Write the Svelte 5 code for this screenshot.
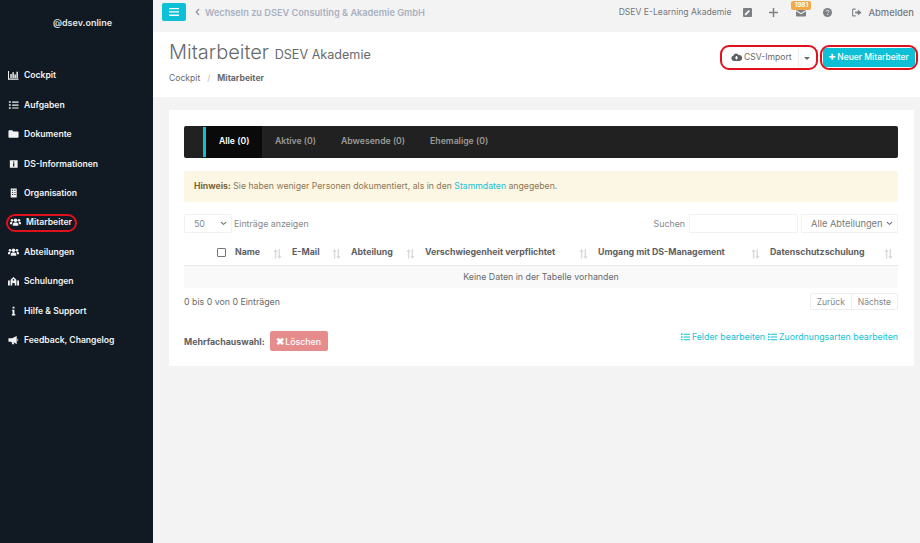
<script lang="ts">
  const nav = [
    { label: 'Cockpit', icon: 'chart' },
    { label: 'Aufgaben', icon: 'tasks' },
    { label: 'Dokumente', icon: 'folder' },
    { label: 'DS-Informationen', icon: 'info' },
    { label: 'Organisation', icon: 'building' },
    { label: 'Mitarbeiter', icon: 'users', active: true },
    { label: 'Abteilungen', icon: 'users' },
    { label: 'Schulungen', icon: 'school' },
    { label: 'Hilfe & Support', icon: 'i' },
    { label: 'Feedback, Changelog', icon: 'bullhorn' }
  ]
  const tabs = ['Alle (0)', 'Aktive (0)', 'Abwesende (0)', 'Ehemalige (0)']
  const columns = [
    { label: 'Name', width: 57 },
    { label: 'E-Mail', width: 59 },
    { label: 'Abteilung', width: 74 },
    { label: 'Verschwiegenheit verpflichtet', width: 173 },
    { label: 'Umgang mit DS-Management', width: 172 },
    { label: 'Datenschutzschulung', width: 128 }
  ]
</script>

{#snippet navIcon(name: string)}
  <svg class="nav-icon" viewBox="0 0 12 10" aria-hidden="true">
    {#if name === 'chart'}
      <path d="M.5 .5v9h11" fill="none" stroke="currentColor" stroke-width="1.200" />
      <path d="M2.500 4h1.600v4.200H2.500zM4.800 2h1.600v6.200H4.800zM7 4.500h1.600v3.700H7zM9.200 1.500h1.600v6.700H9.200z" fill="currentColor" />
    {:else if name === 'tasks'}
      <path d="M4.500 1.200h7v1.300h-7zM4.500 4.400h7v1.300h-7zM4.500 7.600h7v1.300h-7zM1 1h2v1.600H1zM1 4.200h2v1.600H1zM1 7.400h2V9H1z" fill="currentColor" />
    {:else if name === 'folder'}
      <path d="M.5 2.200C.5 1.500 1 1 1.600 1h3l1.200 1.300h4.600c.6 0 1.100.5 1.100 1.100v4.500c0 .6-.5 1.100-1.100 1.100H1.600C1 9 .5 8.500.5 7.900z" fill="currentColor" />
    {:else if name === 'info'}
      <path fill-rule="evenodd" d="M2 .8h8.500v8.400H2zM5.500 2.200v1.200h1.400V2.200zM5.500 4.300v3.500h1.400V4.300z" fill="currentColor" />
    {:else if name === 'building'}
      <path fill-rule="evenodd" d="M3 0h6.500v10H3zM4.300 1.500v1h1.300v-1zM6.900 1.500v1h1.300v-1zM4.300 3.800v1h1.300v-1zM6.900 3.800v1h1.300v-1zM4.300 6.100v1h1.300v-1zM6.900 6.100v1h1.300v-1z" fill="currentColor" />
    {:else if name === 'users'}
      <circle cx="6" cy="3.200" r="2" fill="currentColor" />
      <circle cx="2.200" cy="3" r="1.400" fill="currentColor" />
      <circle cx="9.800" cy="3" r="1.400" fill="currentColor" />
      <path d="M3 9.200V7.300C3 6 4 5.500 6 5.500s3 .5 3 1.800v1.900zM0 7.500V6.100c0-.9.800-1.300 2.600-1.300L2.200 7.500zM12 7.500V6.100c0-.9-.8-1.300-2.600-1.300l.4 2.700z" fill="currentColor" />
    {:else if name === 'school'}
      <path fill-rule="evenodd" d="M2.800 3.500 6 .5l3.200 3V10H7.300V7.300H4.700V10H2.800zM5.100 3.800a.9.900 0 1 0 1.800 0 .9.900 0 1 0-1.800 0zM0 4.500h2v5.500H0zM10 4.500h2v5.500h-2z" fill="currentColor" />
    {:else if name === 'i'}
      <path d="M5 .3h2.100v2H5zM4.500 3.500H7v4.800h.9V10H4.200V8.300H5V5.200h-.5z" fill="currentColor" />
    {:else if name === 'bullhorn'}
      <path d="M.5 3.200h4L9.500.5v9L6 7.100l.9 2.600H4.700L3.700 6.800H.5zM10.300 3.300c1.100.4 1.100 3 0 3.400z" fill="currentColor" />
    {/if}
  </svg>
{/snippet}

{#snippet sortIcon()}
  <svg class="sort" viewBox="0 0 9 10" aria-hidden="true">
    <path d="M1.900 9.800V3H.4L2.600 0l2 3H3.300v6.800zM5.600 0v7H4.300l2.100 3 2.200-3H7V0z" fill="currentColor" />
  </svg>
{/snippet}

{#snippet listIcon()}
  <svg class="list-icon" viewBox="0 0 10 8" aria-hidden="true">
    <path d="M0 .2h1.700v1.500H0zM0 3.200h1.700v1.500H0zM0 6.200h1.700v1.500H0zM2.700.4H10v1.100H2.700zM2.700 3.400H10v1.100H2.700zM2.700 6.400H10v1.100H2.700z" fill="currentColor" />
  </svg>
{/snippet}

<div class="layout">
  <aside class="sidebar">
    <div class="profile">@dsev.online</div>
    <nav class="nav">
      {#each nav as item}
        <div class="nav-item" class:active={item.active}>
          {@render navIcon(item.icon)}
          <span>{item.label}</span>
        </div>
      {/each}
    </nav>
  </aside>

  <main class="main">
    <header class="topbar">
      <button class="burger" aria-label="Menü">
        <svg viewBox="0 0 10 8" aria-hidden="true"><path d="M0 0h10v1.300H0zM0 3.300h10v1.300H0zM0 6.600h10v1.300H0z" fill="#fff" /></svg>
      </button>
      <svg class="chev" viewBox="0 0 5 8" aria-hidden="true"><path d="M4 1 1.300 4 4 7" fill="none" stroke="currentColor" stroke-width="1.300" /></svg>
      <span class="switch">Wechseln zu DSEV Consulting &amp; Akademie GmbH</span>
      <div class="top-right">
        <span class="academy">DSEV E-Learning Akademie</span>
        <svg class="top-icon edit" viewBox="0 0 10 10" aria-hidden="true">
          <path fill-rule="evenodd" d="M1 0h8a1 1 0 0 1 1 1v8a1 1 0 0 1-1 1H1a1 1 0 0 1-1-1V1a1 1 0 0 1 1-1zM2 6.500V8h1.500L7.800 3.700 6.300 2.200z" fill="currentColor" />
        </svg>
        <svg class="top-icon plus" viewBox="0 0 10 10" aria-hidden="true"><path d="M4.200 0h1.600v4.200H10v1.600H5.800V10H4.200V5.800H0V4.200h4.200z" fill="currentColor" /></svg>
        <div class="mail">
          <svg class="top-icon" viewBox="0 0 10 8" aria-hidden="true"><path d="M0 1a1 1 0 0 1 1-1h8a1 1 0 0 1 1 1v.5L5 4.500 0 1.500zM0 2.800 5 5.800l5-3V7a1 1 0 0 1-1 1H1a1 1 0 0 1-1-1z" fill="currentColor" /></svg>
          <span class="badge">1981</span>
        </div>
        <svg class="top-icon help" viewBox="0 0 10 10" aria-hidden="true">
          <circle cx="5" cy="5" r="5" fill="currentColor" />
          <path d="M3.400 3.900C3.500 2.900 4.200 2.500 5 2.500c1 0 1.700.6 1.700 1.400 0 1.200-1.300 1.100-1.300 2" fill="none" stroke="#f3f3f4" stroke-width="1" />
          <path d="M4.800 6.800h1.100v1H4.800z" fill="#f3f3f4" />
        </svg>
        <span class="logout">
          <svg class="top-icon" viewBox="0 0 11 9" aria-hidden="true">
            <path d="M4 .8H1.500C1 .8.700 1.100.700 1.600v5.800c0 .5.300.8.800.8H4" fill="none" stroke="currentColor" stroke-width="1.200" />
            <path d="M6.500 1.200 10.500 4.500 6.500 7.800V5.700H3.500V3.300h3z" fill="currentColor" />
          </svg>
          Abmelden
        </span>
      </div>
    </header>

    <section class="page-head">
      <div>
        <h1>Mitarbeiter <small>DSEV Akademie</small></h1>
        <div class="crumbs"><span>Cockpit</span><i>/</i><b>Mitarbeiter</b></div>
      </div>
      <div class="actions">
        <div class="csv marked">
          <span class="csv-main">
            <svg viewBox="0 0 12 9" aria-hidden="true">
              <path fill-rule="evenodd" d="M3 9a3 3 0 0 1-.6-5.900A3.300 3.300 0 0 1 8.500 2.400 3.300 3.300 0 0 1 9.500 9zM6 7.500l2-2.300H6.800V3.500H5.200v1.700H4z" fill="currentColor" />
            </svg>
            CSV-Import
          </span>
          <span class="caret"></span>
        </div>
        <button class="new marked"><b>+</b>Neuer Mitarbeiter</button>
      </div>
    </section>

    <section class="content">
      <div class="card">
        <div class="tabs">
          <div class="tabs-spacer"></div>
          {#each tabs as tab, i}
            <div class="tab" class:current={i === 0}>{tab}</div>
          {/each}
        </div>

        <div class="alert">
          <b>Hinweis:</b> Sie haben weniger Personen dokumentiert, als in den <a href="#top">Stammdaten</a> angegeben.
        </div>

        <div class="filters">
          <div class="field per-page">50<svg class="select-chev" viewBox="0 0 8 5" aria-hidden="true"><path d="M1 1l3 2.500L7 1" fill="none" stroke="currentColor" stroke-width="1.200" /></svg></div>
          <span class="entries">Einträge anzeigen</span>
          <span class="search-label">Suchen</span>
          <div class="field search"></div>
          <div class="field dept">Alle Abteilungen<svg class="select-chev" viewBox="0 0 8 5" aria-hidden="true"><path d="M1 1l3 2.500L7 1" fill="none" stroke="currentColor" stroke-width="1.200" /></svg></div>
        </div>

        <div class="thead">
          <div class="check-cell"><span class="checkbox"></span></div>
          {#each columns as col}
            <div class="th" style="width: {col.width}px">
              <span>{col.label}</span>
              {@render sortIcon()}
            </div>
          {/each}
        </div>
        <div class="empty">Keine Daten in der Tabelle vorhanden</div>

        <div class="table-foot">
          <span>0 bis 0 von 0 Einträgen</span>
          <div class="pager"><span>Zurück</span><span>Nächste</span></div>
        </div>

        <div class="bulk">
          <b>Mehrfachauswahl:</b>
          <button class="delete"><b>✖</b>Löschen</button>
          <div class="links">
            <a href="#top">{@render listIcon()}Felder bearbeiten</a>
            <a href="#top">{@render listIcon()}Zuordnungsarten bearbeiten</a>
          </div>
        </div>
      </div>
    </section>
  </main>
</div>

<style>
  :global(body) {
    font-family: Inter, 'Open Sans', sans-serif;
    background: #f3f3f4;
  }
  .layout {
    display: flex;
    width: 920px;
    height: 543px;
    overflow: hidden;
    font-size: 9px;
    color: #676a6c;
  }
  .sidebar {
    width: 153px;
    flex: none;
    background: #111a22;
    color: #f1f3f4;
    font-weight: 600;
  }
  .profile {
    padding: 17px 0 0 53px;
    height: 60.500px;
    box-sizing: border-box;
    font-size: 9px;
    color: #e4e6e8;
  }
  .nav {
    display: flex;
    flex-direction: column;
  }
  .nav-item {
    display: flex;
    align-items: center;
    height: 29.450px;
    padding-left: 8px;
    font-size: 8.600px;
    white-space: nowrap;
  }
  .nav-icon {
    width: 11px;
    height: 10px;
    margin-right: 5px;
    flex: none;
  }
  .nav-item.active {
    position: relative;
    padding-left: 10px;
  }
  .nav-item.active::after {
    content: '';
    position: absolute;
    left: 6px;
    top: 6px;
    width: 67px;
    height: 14px;
    border: 2px solid #e0101c;
    border-radius: 9px;
  }
  .main {
    flex: 1;
    min-width: 0;
  }
  .topbar {
    display: flex;
    align-items: center;
    height: 32px;
    padding: 0 6px 8px 9px;
    box-sizing: border-box;
    color: #6b6e70;
  }
  .burger {
    width: 24px;
    height: 18px;
    padding: 0;
    border: 0;
    border-radius: 2px;
    background: #0dc0d5;
    display: flex;
    align-items: center;
    justify-content: center;
  }
  .burger svg {
    width: 10px;
    height: 8px;
  }
  .chev {
    width: 5px;
    height: 8px;
    margin: 0 5px 0 9px;
    color: #8c95a6;
  }
  .switch {
    color: #a9b0c0;
    font-weight: 600;
    font-size: 9.200px;
  }
  .top-right {
    margin-left: auto;
    display: flex;
    align-items: center;
  }
  .academy {
    font-size: 8.600px;
    color: #74777a;
    margin-right: 12px;
  }
  .top-icon {
    width: 9px;
    height: 9px;
    color: #7d8083;
    flex: none;
  }
  .edit {
    margin-right: 17px;
  }
  .plus {
    margin-right: 18px;
  }
  .mail {
    position: relative;
    display: flex;
    margin-right: 17px;
  }
  .mail .top-icon {
    width: 10px;
  }
  .badge {
    position: absolute;
    left: -5px;
    top: -7px;
    padding: 1px 3px;
    border-radius: 2px;
    background: #f0a94b;
    color: #fff;
    font-size: 6.500px;
    line-height: 7px;
    font-weight: 600;
  }
  .help {
    margin-right: 20px;
  }
  .logout {
    display: flex;
    align-items: center;
    gap: 6px;
    font-weight: 500;
    font-size: 9.400px;
    color: #74777a;
  }
  .logout .top-icon {
    width: 10px;
  }
  .page-head {
    display: flex;
    justify-content: space-between;
    height: 65px;
    padding: 9px 5.500px 0 16px;
    box-sizing: border-box;
    background: #fff;
  }
  h1 {
    margin: 0;
    font-size: 20px;
    line-height: 22px;
    font-weight: 300;
    color: #676a6c;
  }
  h1 small {
    font-size: 12.600px;
    font-weight: 400;
  }
  .crumbs {
    margin-top: 7px;
    font-size: 8.600px;
    display: flex;
    align-items: center;
  }
  .crumbs i {
    margin: 0 7px;
    font-style: normal;
    color: #b5b7b9;
  }
  .actions {
    display: flex;
    align-items: flex-start;
    gap: 8px;
    margin-top: 6.500px;
  }
  .marked {
    position: relative;
  }
  .marked::after {
    content: '';
    position: absolute;
    inset: -3px;
    border: 2px solid #e0101c;
    border-radius: 9px;
    pointer-events: none;
  }
  .csv {
    width: 92px;
    height: 19px;
    display: flex;
    align-items: center;
    font-size: 8.600px;
    color: #676a6c;
    white-space: nowrap;
  }
  .csv-main {
    display: flex;
    align-items: center;
    gap: 2px;
    width: 76.500px;
    flex: none;
    box-sizing: border-box;
    height: 100%;
    padding-left: 8.500px;
    border-right: 1px solid #eee;
  }
  .csv-main svg {
    width: 11px;
    height: 8px;
    color: #5d6063;
  }
  .caret {
    width: 0;
    height: 0;
    margin: 2px 0 0 5px;
    border: 3px solid transparent;
    border-top: 3px solid #676a6c;
    border-bottom: 0;
  }
  .new {
    width: 92px;
    height: 19px;
    padding: 0;
    border: 0;
    border-radius: 3px;
    background: #0dc0d5;
    color: #fff;
    font: 500 8.500px Inter, sans-serif;
    white-space: nowrap;
  }
  .new b {
    font-size: 12px;
    line-height: 8px;
    margin-right: 1px;
  }
  .content {
    padding: 13px 6px 0 16px;
  }
  .card {
    height: 256px;
    padding: 16px 16px 0 15px;
    box-sizing: border-box;
    background: #fff;
  }
  .tabs {
    display: flex;
    height: 31.500px;
    border-radius: 2px;
    background: #212121;
    color: #9a9a9a;
    font-weight: 600;
    font-size: 8.700px;
  }
  .tabs-spacer {
    width: 19px;
    border-right: 3px solid #0dc0d5;
    margin: 1px 0;
  }
  .tab {
    display: flex;
    align-items: center;
    padding: 0 12.500px 2px;
  }
  .tab.current {
    background: #0a0a0a;
    color: #fff;
    padding: 0 13px 2px;
  }
  .alert {
    margin-top: 13px;
    height: 31px;
    line-height: 30px;
    padding-left: 10px;
    border-radius: 2px;
    background: #fcf6e4;
    color: #8d7752;
    font-size: 8.700px;
  }
  .alert b {
    font-weight: 700;
    color: #7e6535;
  }
  .alert a {
    color: #14c2d4;
    text-decoration: none;
  }
  .filters {
    display: flex;
    align-items: center;
    margin-top: 12.500px;
    font-size: 8.800px;
  }
  .field {
    height: 19px;
    box-sizing: border-box;
    border: 1px solid #f1f1f1;
    border-radius: 1px;
    display: flex;
    align-items: center;
    justify-content: space-between;
  }
  .select-chev {
    width: 7px;
    height: 5px;
    color: #676a6c;
  }
  .per-page {
    width: 48px;
    padding: 0 4px 0 9px;
    color: #8a8d8f;
  }
  .entries {
    margin-left: 2px;
    color: #85888a;
  }
  .search-label {
    margin-left: auto;
    margin-right: 4px;
    color: #85888a;
  }
  .search {
    width: 109px;
    margin-right: 3px;
  }
  .dept {
    width: 97px;
    padding: 0 4px 0 9px;
    color: #77797b;
    font-size: 9.300px;
  }
  .thead {
    display: flex;
    align-items: flex-start;
    height: 32.500px;
    padding-top: 13px;
    box-sizing: border-box;
    border-bottom: 1px solid #e7e7e7;
    color: #5e6163;
    font-weight: 700;
    font-size: 8.800px;
  }
  .check-cell {
    width: 51px;
    display: flex;
    justify-content: flex-end;
    padding-right: 9px;
    box-sizing: border-box;
    margin-top: 2px;
  }
  .checkbox {
    width: 7px;
    height: 7px;
    border: 1px solid #767676;
    border-radius: 1px;
  }
  .th {
    display: flex;
    justify-content: space-between;
    box-sizing: border-box;
    padding-right: 10px;
    white-space: nowrap;
    flex: none;
  }
  .th:last-child {
    padding-right: 5px;
  }
  .sort {
    width: 9px;
    height: 10px;
    margin-top: 3px;
    color: #d8dadb;
    flex: none;
  }
  .empty {
    height: 22.500px;
    line-height: 21.500px;
    text-align: center;
    background: #f9f9f9;
    color: #676a6c;
    font-size: 8.800px;
  }
  .table-foot {
    display: flex;
    justify-content: space-between;
    align-items: center;
    margin-top: 5px;
    font-size: 8.800px;
  }
  .pager {
    display: flex;
    height: 17px;
    box-sizing: border-box;
    border: 1px solid #eee;
    border-radius: 2px;
    color: #85888a;
    font-size: 8.500px;
  }
  .pager span {
    display: flex;
    align-items: center;
    padding: 0 6px;
  }
  .pager span + span {
    border-left: 1px solid #eee;
  }
  .bulk {
    display: flex;
    align-items: center;
    margin-top: 21px;
    font-size: 8.800px;
  }
  .bulk > b {
    color: #5e6163;
  }
  .delete {
    width: 58px;
    height: 20px;
    margin-left: 5px;
    padding: 0;
    border: 0;
    border-radius: 2px;
    background: #e78c8c;
    color: #fff;
    font: 500 8.800px Inter, sans-serif;
  }
  .delete b {
    font-size: 9.500px;
    margin-right: 1px;
  }
  .links {
    margin-left: auto;
    display: flex;
    gap: 3px;
    margin-top: -9px;
  }
  .links a {
    display: flex;
    align-items: center;
    gap: 2px;
    color: #14c2d4;
    text-decoration: none;
  }
  .list-icon {
    width: 9px;
    height: 8px;
  }
</style>
